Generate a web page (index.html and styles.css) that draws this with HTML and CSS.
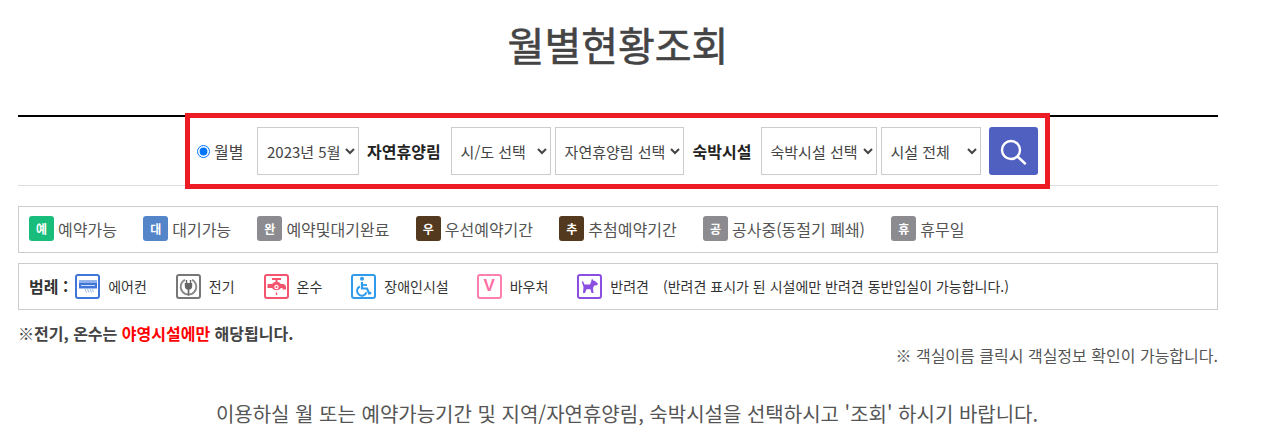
FILE: index.html
```html
<!DOCTYPE html>
<html lang="ko">
<head>
  <meta charset="UTF-8">
  <title>월별현황조회</title>
  <link rel="stylesheet" href="styles.css">
</head>
<body>
  <div class="contenedor">
    <h1 class="titulo">월별현황조회</h1>

    <div class="buscador">
      <div class="marca"></div>
      <label class="radio"><input type="radio" name="tipo" checked> 월별</label>
      <select class="sel s-mes"><option>2023년 5월</option></select>
      <b class="etiqueta e1">자연휴양림</b>
      <select class="sel s-sido"><option>시/도 선택</option></select>
      <select class="sel s-hue"><option>자연휴양림 선택</option></select>
      <b class="etiqueta e2">숙박시설</b>
      <select class="sel s-suk"><option>숙박시설 선택</option></select>
      <select class="sel s-all"><option>시설 전체</option></select>
      <button class="btn-buscar" aria-label="조회">
        <svg width="28" height="28" viewBox="0 0 28 28" fill="none" stroke="#fff" stroke-width="2.4" stroke-linecap="round">
          <circle cx="12" cy="13" r="9"/>
          <path d="M18.500 19.500l7.500 7"/>
        </svg>
      </button>
    </div>

    <div class="caja estados">
      <span class="estado"><i class="badge verde">예</i>예약가능</span>
      <span class="estado"><i class="badge azul">대</i>대기가능</span>
      <span class="estado"><i class="badge gris">완</i>예약및대기완료</span>
      <span class="estado"><i class="badge cafe">우</i>우선예약기간</span>
      <span class="estado"><i class="badge cafe">추</i>추첨예약기간</span>
      <span class="estado"><i class="badge gris">공</i>공사중(동절기 폐쇄)</span>
      <span class="estado"><i class="badge gris">휴</i>휴무일</span>
    </div>

    <div class="caja leyenda">
      <b class="ley-titulo">범례 :</b>
      <span class="item">
        <span class="ico c-aire">
          <svg width="21" height="21" viewBox="0 0 21 21">
            <path d="M2 4.500h18v8H2z" fill="#3f76d8"/>
            <path d="M2 4.500h18v2.500H2z" fill="#8fb2ec"/>
            <path d="M4 9h14v1H4z" fill="#cfe0fa"/>
            <path d="M8 13l1.500 3.500M10.500 13l1.500 3.500M13 13l1.500 3.500M15.500 13l1 3" stroke="#8fb2ec" stroke-width=".9" fill="none"/>
          </svg>
        </span>에어컨
      </span>
      <span class="item">
        <span class="ico c-elec">
          <svg width="21" height="21" viewBox="0 0 21 21" fill="none">
            <path d="M7 3.800a7.800 7.800 0 1 0 7 0" stroke="#8a8a8a" stroke-width="1.800"/>
            <path d="M8.500 4v3M12.500 4v3" stroke="#666" stroke-width="1.400"/>
            <path d="M6.800 7h7.400v3a3.700 3.700 0 0 1-7.400 0z" fill="#666"/>
            <path d="M10.500 13v6.500" stroke="#666" stroke-width="1.600"/>
          </svg>
        </span>전기
      </span>
      <span class="item">
        <span class="ico c-agua">
          <svg width="21" height="21" viewBox="0 0 21 21">
            <path d="M6 3h9" stroke="#f4546d" stroke-width="2" fill="none"/>
            <path d="M9.500 3h2v4h-2z" fill="#f4546d"/>
            <path d="M1.500 8H6a5.500 5.500 0 0 1 9 0h1.500a3.500 3.500 0 0 1 3.500 3.500v2h-3.500V12H15a5.500 5.500 0 0 1-9 0H1.500z" fill="#f4546d"/>
            <circle cx="10.500" cy="11" r="2.200" fill="#fff"/>
            <circle cx="10.500" cy="11" r="1" fill="#f4546d"/>
            <path d="M10.500 16.500v2.500" stroke="#f4546d" stroke-width="1.400"/>
          </svg>
        </span>온수
      </span>
      <span class="item i-disc">
        <span class="ico c-disc">
          <svg width="21" height="21" viewBox="0 0 21 21" fill="none">
            <circle cx="9" cy="2.800" r="2" fill="#2f9bea"/>
            <path d="M9 6v6.500h5l2.200 5 2-.8" stroke="#2f9bea" stroke-width="2.200"/>
            <path d="M9 9h5" stroke="#2f9bea" stroke-width="1.800"/>
            <path d="M6.800 10.500a4.800 4.800 0 1 0 6.700 5.700" stroke="#2f9bea" stroke-width="2"/>
          </svg>
        </span>장애인시설
      </span>
      <span class="item">
        <span class="ico c-vale"><span class="letra-v">V</span></span>바우처
      </span>
      <span class="item i-perro">
        <span class="ico c-perro">
          <svg width="21" height="21" viewBox="0 0 21 21">
            <path d="M13 2.500l1.200 2 1.800.5 3 2.800-1 1.400-2.700.3-1.300 2.500.5 5h-2l-1-3.800H7.500L6 17H4l.5-6-1.800-5.500 1.300-.2L5.500 8.500H11l1-2.500z" fill="#8a4fe0"/>
          </svg>
        </span>반려견
      </span>
      <span class="ley-nota">(반려견 표시가 된 시설에만 반려견 동반입실이 가능합니다.)</span>
    </div>

    <p class="aviso">※전기, 온수는 <em>야영시설에만</em> 해당됩니다.</p>
    <p class="aviso-der">※ 객실이름 클릭시 객실정보 확인이 가능합니다.</p>
    <p class="mensaje">이용하실 월 또는 예약가능기간 및 지역/자연휴양림, 숙박시설을 선택하시고 '조회' 하시기 바랍니다.</p>
  </div>
</body>
</html>
```

FILE: styles.css
```css
html, body {
  margin: 0;
  background: #fff;
}
body {
  font-family: "Noto Sans CJK KR", "Noto Sans", sans-serif;
  color: #444;
  overflow: hidden;
}
.contenedor {
  width: 1200px;
  margin-left: 18px;
}
.titulo {
  margin: 0;
  height: 115px;
  padding-top: 14px;
  box-sizing: border-box;
  text-align: center;
  font-size: 40px;
  line-height: 60px;
  font-weight: 400;
  -webkit-text-stroke: 0.6px #444;
  color: #444;
}
.buscador {
  position: relative;
  display: flex;
  align-items: center;
  height: 48px;
  padding: 10px 0 10px 179px;
  border-top: 2px solid #000;
  border-bottom: 1px solid #ddd;
  color: #333;
}
.marca {
  position: absolute;
  left: 167px;
  top: -4px;
  width: 865px;
  height: 76px;
  border: 5px solid #ed1c24;
  box-sizing: border-box;
}
.radio {
  display: flex;
  align-items: center;
  gap: 4px;
  width: 60px;
  font-size: 16px;
  color: #444;
}
.radio input {
  margin: 0;
  width: 13px;
  height: 13px;
}
.sel {
  height: 48px;
  border: 1px solid #ccc;
  background: #fff;
  color: #444;
  font-family: inherit;
  font-size: 15px;
  padding: 0 0 0 5px;
  border-radius: 0;
}
.s-mes { width: 102px; }
.s-sido { width: 100px; margin-right: 4px; }
.s-hue { width: 129px; }
.s-suk { width: 116px; margin-right: 4px; }
.s-all { width: 100px; }
.etiqueta {
  font-size: 16px;
  font-weight: 700;
  color: #222;
}
.e1 { margin: 0 10px 0 8px; }
.e2 { margin: 0 9px 0 9px; }
.btn-buscar {
  display: flex;
  align-items: center;
  justify-content: center;
  width: 49px;
  height: 48px;
  margin-left: 8px;
  padding: 0;
  border: none;
  border-radius: 3px;
  background: #4f60c0;
}
.caja {
  display: flex;
  align-items: center;
  box-sizing: border-box;
  border: 1px solid #ccc;
  height: 47px;
  padding: 0 0 2px 10px;
  color: #555;
}
.estados {
  margin-top: 20px;
  gap: 26.3px;
  font-size: 16px;
}
.leyenda {
  margin-top: 10px;
  padding-bottom: 1px;
  font-size: 14px;
  color: #333;
}
.estado {
  display: flex;
  align-items: center;
  gap: 4px;
}
.badge {
  display: flex;
  align-items: center;
  justify-content: center;
  width: 25px;
  height: 25px;
  border-radius: 3px;
  color: #fff;
  font-style: normal;
  font-size: 12px;
  font-weight: 700;
}
.verde { background: #19bd7b; }
.azul { background: #5585c9; }
.gris { background: #8c8c90; }
.cafe { background: #53391d; }
.ley-titulo {
  font-size: 16px;
  color: #333;
  margin-right: 7px;
}
.item {
  display: flex;
  align-items: center;
  gap: 8px;
  margin-right: 29px;
}
.i-disc { margin-right: 28px; }
.ico {
  display: flex;
  align-items: center;
  justify-content: center;
  box-sizing: border-box;
  width: 25px;
  height: 25px;
  border: 2px solid;
  border-radius: 3px;
}
.c-aire { border-color: #3f76d8; }
.c-elec { border-color: #777; }
.c-agua { border-color: #f4546d; }
.c-disc { border-color: #2f9bea; }
.c-vale { border-color: #ff7fae; }
.c-perro { border-color: #8a4fe0; }
.letra-v {
  font-family: "Liberation Sans", sans-serif;
  font-size: 17px;
  font-weight: 700;
  color: #ff6fa5;
}
.i-perro { margin-right: 14px; }
.aviso {
  margin: 12px 0 0;
  font-size: 16px;
  line-height: 22px;
  font-weight: 700;
  color: #444;
}
.aviso em {
  font-style: normal;
  color: #f00;
}
.aviso-der {
  margin: 0;
  text-align: right;
  font-size: 16px;
  line-height: 22px;
  color: #555;
}
.mensaje {
  margin: 33px 0 0;
  padding-left: 18px;
  text-align: center;
  font-size: 20px;
  line-height: 30px;
  color: #555;
}
```
